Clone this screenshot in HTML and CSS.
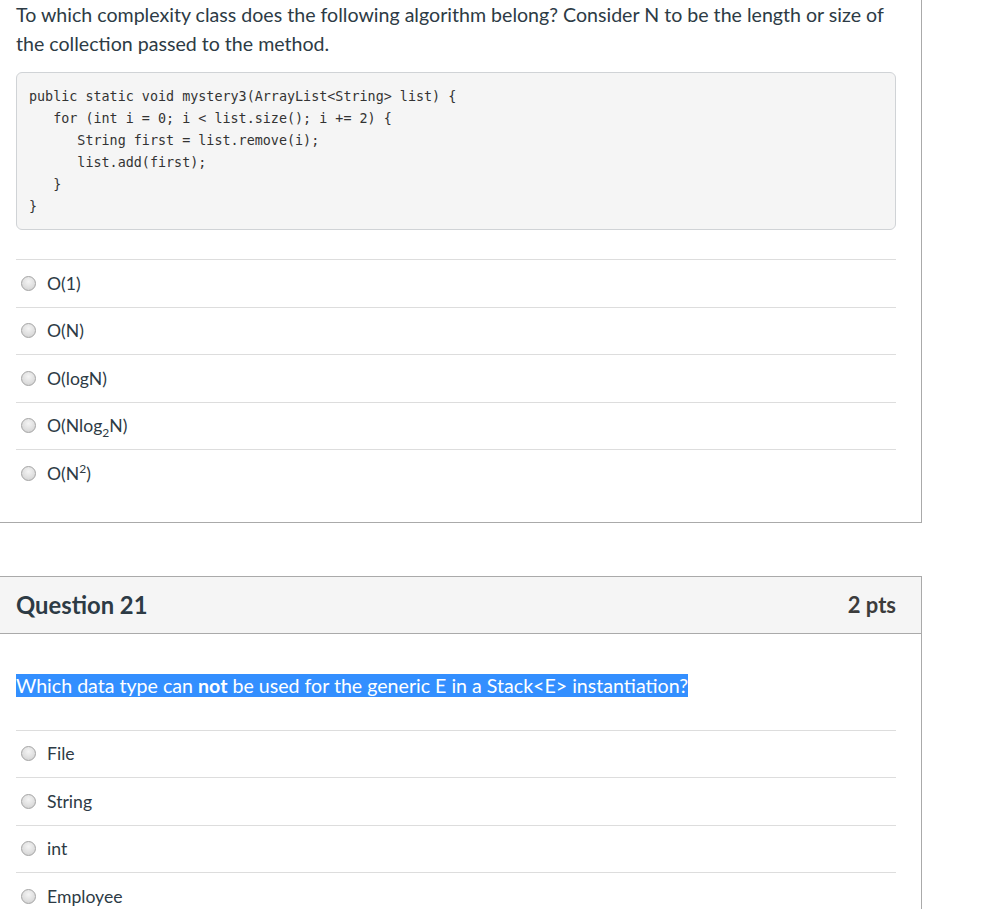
FILE: index.html
```html
<!DOCTYPE html>
<html>
<head>
<meta charset="utf-8">
<link rel="stylesheet" href="styles.css">
</head>
<body>
<div class="page">
  <section class="card card-prev">
    <div class="card-body">
      <p class="question-text">To which complexity class does the following algorithm belong? Consider N to be the length or size of the collection passed to the method.</p>
      <pre class="code">public static void mystery3(ArrayList&lt;String&gt; list) {
   for (int i = 0; i &lt; list.size(); i += 2) {
      String first = list.remove(i);
      list.add(first);
   }
}</pre>
      <ul class="answers">
        <li class="answer"><span class="radio"></span><span class="label">O(1)</span></li>
        <li class="answer"><span class="radio"></span><span class="label">O(N)</span></li>
        <li class="answer"><span class="radio"></span><span class="label">O(logN)</span></li>
        <li class="answer"><span class="radio"></span><span class="label">O(Nlog<sub>2</sub>N)</span></li>
        <li class="answer"><span class="radio"></span><span class="label">O(N<sup>2</sup>)</span></li>
      </ul>
    </div>
  </section>

  <section class="card card-q21">
    <header class="card-header">
      <h2 class="q-title">Question 21</h2>
      <span class="q-points">2 pts</span>
    </header>
    <div class="card-body body-q21">
      <p class="question-text selected"><span class="sel">Which data type can <strong>not</strong> be used for the generic E in a Stack&lt;E&gt; instantiation?</span></p>
      <ul class="answers">
        <li class="answer"><span class="radio"></span><span class="label">File</span></li>
        <li class="answer"><span class="radio"></span><span class="label">String</span></li>
        <li class="answer"><span class="radio"></span><span class="label">int</span></li>
        <li class="answer"><span class="radio"></span><span class="label">Employee</span></li>
      </ul>
    </div>
  </section>
</div>
</body>
</html>
```

FILE: styles.css
```css
html, body {
  margin: 0;
  padding: 0;
  background: #ffffff;
}

body {
  font-family: Lato, "Open Sans", "Liberation Sans", sans-serif;
  color: #2d3b45;
  overflow: hidden;
}

.page {
  width: 922px;
}

.card {
  border-right: 1px solid #aaaaaa;
  border-bottom: 1px solid #aaaaaa;
  box-sizing: border-box;
  width: 922px;
}

.card-q21 {
  margin-top: 53px;
  border-top: 1px solid #aaaaaa;
}

.card-body {
  padding: 0 25px 25px 16px;
}

.question-text {
  margin: 0;
  font-size: 19.6px;
  line-height: 29px;
}

.code {
  margin: 14px 0 0 0;
  padding: 13px 12px 11px 12px;
  background: #f5f5f5;
  border: 1px solid #d0d3d6;
  border-radius: 6px;
  font-family: "DejaVu Sans Mono", "Liberation Mono", monospace;
  font-size: 13.4px;
  line-height: 22px;
  color: #333333;
  white-space: pre;
}

.answers {
  list-style: none;
  margin: 29px 0 0 0;
  padding: 0;
}

.answer {
  display: flex;
  align-items: center;
  height: 46.5px;
  border-top: 1px solid #dddddd;
  font-size: 17.6px;
}

.radio {
  width: 13px;
  height: 13px;
  border-radius: 50%;
  border: 1px solid #a4a4a4;
  background: radial-gradient(circle at 50% 35%, #f4f4f4 0%, #dedede 60%, #c9c9c9 100%);
  margin-left: 5px;
  margin-right: 11px;
  flex: none;
}

.label sub, .label sup {
  font-size: 12px;
  line-height: 0;
}

.card-header {
  display: flex;
  justify-content: space-between;
  align-items: center;
  height: 56px;
  background: #f5f5f5;
  border-bottom: 1px solid #aaaaaa;
  padding: 0 25px 0 16px;
}

.q-title {
  margin: 0;
  font-size: 23.8px;
  font-weight: 700;
  color: #2d3b45;
}

.q-points {
  font-size: 22px;
  font-weight: 700;
  color: #3c3c3c;
}

.body-q21 {
  padding-top: 37px;
}

.sel {
  background: #338fff;
  color: #ffffff;
}

.body-q21 .answers {
  margin-top: 30px;
}
```
